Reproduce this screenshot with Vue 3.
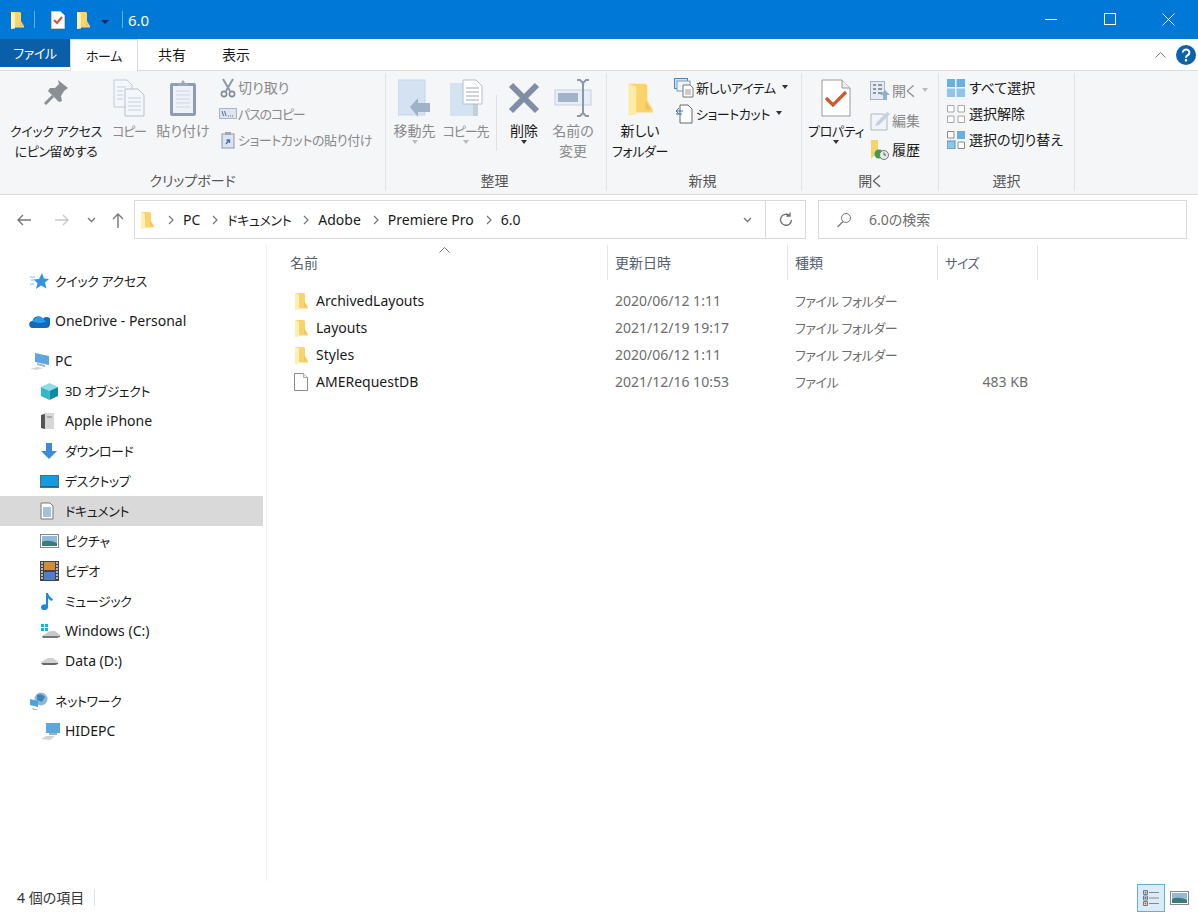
<script setup>
import { h } from 'vue'

const folderD = (a = '#fff0b4', b = '#fbd36b', c = '#e9b949') =>
  `<path d="M1 1h9l1 1v8l3 5v1.500H5L1 18z" fill="${b}"/><path d="M1 1l4 1.600V17.500L1 18z" fill="${a}"/><path d="M10 2v8l3 5h-3z" fill="${c}" opacity=".55"/>`

const icons = {
  folder: { w: 14, h: 18, d: folderD() },
  folderBig: { w: 26, h: 37, d: `<g transform="translate(0 3) scale(1.85)">${folderD('#fdeaa5', '#fbd36b', '#eab84a')}</g>` },
  check: { w: 16, h: 18, d: '<path d="M1.500.5h9l4 4v13h-13z" fill="#fff" stroke="#c9c9c9"/><path d="M4 9l3 3 5-6" fill="none" stroke="#d9502b" stroke-width="2"/>' },
  pin: { w: 26, h: 26, d: '<path d="M15 1l10 8-4 3-3 5 1 5-3 1L5 12l2-3h5l4-4z" fill="#8b8f94"/><path d="M10 17l-8 8" stroke="#8b8f94" stroke-width="3"/>' },
  copy: { w: 32, h: 38, d: '<path d="M1 1h13l5 5v22H1z" fill="#f3f7fb" stroke="#c2cad3"/><path d="M12 10h13l6 6v21H12z" fill="#f3f7fb" stroke="#b7c1cc"/><path d="M4 8h9M4 12h6M4 16h6M4 20h6M15 19h13M15 23h13M15 27h13M15 31h13" stroke="#c2d0e0"/>' },
  paste: { w: 28, h: 38, d: '<rect x="1" y="4" width="26" height="33" rx="2" fill="#8d9db4"/><rect x="4" y="7" width="20" height="27" fill="#eef2f8"/><path d="M7 12h14M7 16h14M7 20h14M7 24h14M7 28h14" stroke="#cdd7e4"/><path d="M9 7V4h3l2-3 2 3h3v3z" fill="#9aa8bb"/>' },
  scissors: { w: 16, h: 20, d: '<path d="M3 1l7 12M13 1L6 13" stroke="#8f99a5" stroke-width="2"/><circle cx="4" cy="16" r="2.600" fill="none" stroke="#7f8a97" stroke-width="1.600"/><circle cx="12" cy="16" r="2.600" fill="none" stroke="#7f8a97" stroke-width="1.600"/>' },
  pathcopy: { w: 18, h: 12, d: '<rect x=".5" y=".5" width="17" height="10" fill="#dfe5f0" stroke="#a9b5c6"/><path d="M3 3l1.500 5M5.500 3L7 8M9 8h1M11 8h1M13 8h1" stroke="#5a6f90"/>' },
  shortcut: { w: 14, h: 18, d: '<rect x="1" y="3" width="12" height="14" fill="#dde4ee" stroke="#8b99ad"/><rect x="4" y="1" width="6" height="3" fill="#9aa8bb"/><path d="M5 13l3-4M5.500 9H8.500V12" stroke="#3d78b5" fill="none" stroke-width="1.400"/>' },
  move: { w: 34, h: 38, d: '<rect x="0" y="1" width="27" height="35" fill="#d5e2f1" stroke="#c7d5e6"/><path d="M12 28l8-9v5h12v9H20v5z" fill="#9fb2c9"/>' },
  copyto: { w: 34, h: 38, d: '<rect x="1" y="4" width="28" height="33" fill="#d5e2f1"/><rect x="24" y="4" width="5" height="33" fill="#c4cfdc"/><path d="M14 1h13l6 6v18H14z" fill="#fff" stroke="#b4bfcb"/><path d="M17 9h13M17 13h13M17 17h13M17 21h13" stroke="#9aa8b8"/>' },
  del: { w: 32, h: 35, d: '<path d="M3 6l26 26M29 6L3 32" stroke="#7f8ea6" stroke-width="6"/>' },
  rename: { w: 38, h: 38, d: '<rect x="1" y="11" width="36" height="15" fill="#e7eef8" stroke="#c2d1e4"/><rect x="4" y="14" width="20" height="9" fill="#a3b3c8"/><path d="M23 1h3l3 3 3-3h3M29 4v30M23 37h3l3-3 3 3h3" fill="none" stroke="#8a98ab" stroke-width="2"/>' },
  newitem: { w: 20, h: 20, d: '<rect x=".5" y=".5" width="13" height="10" fill="#cfe3f5" stroke="#4d86b8"/><rect x="3" y="3" width="13" height="10" fill="#eef5fb" stroke="#7a9cc0"/><path d="M9 7h7l3 3v9H9z" fill="#fff" stroke="#777"/><path d="M11 12h6M11 14h6M11 16h6" stroke="#999"/>' },
  shortnew: { w: 18, h: 20, d: '<path d="M5 1h8l4 4v14H5z" fill="#fff" stroke="#666"/><path d="M1 7h7M4 4l-3 3 3 3M1 10h6" fill="none" stroke="#2a7ab8"/>' },
  props: { w: 30, h: 38, d: '<path d="M1 1h20l8 8v28H1z" fill="#fff" stroke="#9a9a9a"/><path d="M21 1v8h8" fill="#eee" stroke="#9a9a9a"/><path d="M5 19l7 7 13-13" fill="none" stroke="#d4572a" stroke-width="3.200"/>' },
  open: { w: 20, h: 20, d: '<rect x=".5" y=".5" width="14" height="18" fill="#e6ebf2" stroke="#a9b4c2"/><path d="M3 4h3M3 8h3M3 12h3M8 4h4M8 8h4M8 12h4" stroke="#8d99a8" stroke-width="2"/><path d="M15 9l5 5h-3v5h-4v-5h-3z" fill="#8fb0d0"/>' },
  edit: { w: 20, h: 20, d: '<path d="M1 3h12l4 2v14H1z" fill="#f1f4f8" stroke="#aeb8c4"/><path d="M5 15l2-4L17 1l3 2L9 14z" fill="#c3d0de"/>' },
  history: { w: 20, h: 20, d: '<path d="M1 0h7v9l4 7H4l-3 3z" fill="#f9d368"/><circle cx="9" cy="14" r="4.500" fill="#3fa04a"/><circle cx="14" cy="15" r="4.500" fill="#e8e8e8" stroke="#777"/><path d="M14 12.500V15h2" stroke="#555" fill="none"/>' },
  selAll: { w: 18, h: 18, d: '<rect width="8" height="8" fill="#68b0e2"/><rect x="9.500" width="8.500" height="8" fill="#68b0e2"/><rect y="9.500" width="8" height="8.500" fill="#8ec5ea"/><rect x="9.500" y="9.500" width="8.500" height="8.500" fill="#8ec5ea"/>' },
  selNone: { w: 18, h: 18, d: '<path d="M.5.500h6.500v6.500H.5zM11 .5h6.500v6.500H11zM.5 11h6.500v6.500H.5zM11 11h6.500v6.500H11z" fill="#fff" stroke="#a6a6a6"/>' },
  selInv: { w: 18, h: 18, d: '<path d="M.5.500h6.500v6.500H.5zM11 11h6.500v6.500H11z" fill="#fff" stroke="#8a8a8a"/><rect x="10" width="8" height="8" fill="#68b0e2"/><rect y="10" width="8" height="8" fill="#8ec5ea" stroke="#4d93c7"/>' },
  star: { w: 20, h: 18, d: '<path d="M13 1l2 5.500 5 .5-4 3.500 1.500 6L12 13.500 7 17l1.500-6-4-3.500L10 7z" fill="#3492de"/><path d="M1 5h5M2 8h3M1 12h4" stroke="#7dbcec"/>' },
  cloud: { w: 21, h: 13, d: '<path d="M4 13a3.500 3.500 0 0 1-.5-7A6 6 0 0 1 14 3.500 4.500 4.500 0 0 1 21 9.500Q20.500 13 17 13z" fill="#0f6cbd"/><path d="M4 7A6 6 0 0 1 14 3.500l3 3.500-6 1z" fill="#2b9be8"/>' },
  pc: { w: 21, h: 18, d: '<path d="M6 1l14 3v9L6 10z" fill="#5ba7de"/><path d="M8 11l8 2v2L8 13z" fill="#9db3c5"/><path d="M1 17l7-2 6 1-6 2z" fill="#d4d4d4"/>' },
  pc2: { w: 21, h: 18, d: '<rect x="6" y="1" width="14" height="10" fill="#5ba7de"/><rect x="9" y="11" width="8" height="2" fill="#9db3c5"/><path d="M1 17l5-3h9l-5 4z" fill="#d4d4d4"/>' },
  cube: { w: 19, h: 19, d: '<path d="M9.500 1L18 5 9.500 9 1 5z" fill="#8fdce6"/><path d="M1 5l8.500 4v9L1 14z" fill="#35b6ca"/><path d="M18 5L9.500 9v9L18 14z" fill="#0f8ba6"/>' },
  phone: { w: 15, h: 18, d: '<path d="M1 3l4-2h9v16H5l-4-1z" fill="#d8d8d8"/><path d="M1 3l4-1v15l-4-1z" fill="#555"/><rect x="7" y="4" width="5" height="2" fill="#aaa"/>' },
  down: { w: 18, h: 18, d: '<path d="M6 1h6v8h5l-8 8-8-8h5z" fill="#3c8ae0"/>' },
  desktop: { w: 19, h: 13, d: '<rect x=".5" y=".5" width="18" height="12" fill="#159ae4" stroke="#666"/><rect x="1" y="11" width="17" height="1" fill="#0b6fae"/>' },
  doc: { w: 14, h: 18, d: '<path d="M1 1h9l3 3v13H1z" fill="#fff" stroke="#777"/><path d="M3 6h8M3 8h8M3 10h8M3 12h8M3 14h8" stroke="#4d86b8"/>' },
  pic: { w: 19, h: 14, d: '<rect x=".5" y=".5" width="18" height="13" fill="#fff" stroke="#888"/><rect x="2" y="2" width="15" height="10" fill="#8dbbd8"/><path d="M2 8q6-3 15 1v3H2z" fill="#3b7a7a"/>' },
  video: { w: 19, h: 20, d: '<rect width="19" height="20" fill="#444"/><rect x="4" y="1" width="11" height="8" fill="#d28b36"/><rect x="4" y="11" width="11" height="8" fill="#4e80c8"/><path d="M1 2h2M1 5h2M1 8h2M1 11h2M1 14h2M1 17h2M16 2h2M16 5h2M16 8h2M16 11h2M16 14h2M16 17h2" stroke="#ddd" stroke-width="1.500"/>' },
  music: { w: 14, h: 18, d: '<path d="M6 1h2q1 4 5 6l-1 2Q9 8 8 6v9a3.500 3 0 1 1-2-2.500z" fill="#1d87d8"/>' },
  winDrive: { w: 20, h: 16, d: '<path d="M1 1h3v3H1zM5 1h3v3H5zM1 5h3v3H1zM5 5h3v3H5z" fill="#14b6d6"/><path d="M2 13l8-5h5l5 4v2l-4 1H3z" fill="#c9c9c9"/><path d="M2 13h18v1l-4 1H3z" fill="#777"/>' },
  drive: { w: 19, h: 9, d: '<path d="M1 5l7-4h5l5 4v2l-3 1H3z" fill="#d0d0d0"/><path d="M1 6h17v1l-3 1H3z" fill="#666"/>' },
  net: { w: 20, h: 18, d: '<circle cx="12" cy="7" r="6.500" fill="#8fb7d8"/><path d="M8 3q5-2 8 2l-3 5-5-2z" fill="#3f86b8"/><path d="M1 7l8 2v6l-8-2z" fill="#4aa3e0"/><path d="M3 16l4 1 3 1H4z" fill="#bbb"/>' },
  caretUp: { w: 11, h: 6, d: '<path d="M.5 5.500l5-5 5 5" fill="none" stroke="#777"/>' },
  file: { w: 14, h: 18, d: '<path d="M.5.500h9l4 4v13H.5z" fill="#fff" stroke="#8a8a8a"/><path d="M9.500.5v4h4" fill="#eee" stroke="#aaa"/>' },
  back: { w: 16, h: 12, d: '<path d="M15 6H2M7 1L2 6l5 5" fill="none" stroke="#777" stroke-width="1.400"/>' },
  fwd: { w: 16, h: 12, d: '<path d="M1 6h13M9 1l5 5-5 5" fill="none" stroke="#c8c8c8" stroke-width="1.400"/>' },
  chev: { w: 9, h: 6, d: '<path d="M1 1l3.500 3.500L8 1" fill="none" stroke="#777" stroke-width="1.300"/>' },
  up: { w: 12, h: 16, d: '<path d="M6 16V2M1 7l5-5 5 5" fill="none" stroke="#777" stroke-width="1.400"/>' },
  crumb: { w: 6, h: 10, d: '<path d="M1 1l4 4-4 4" fill="none" stroke="#777" stroke-width="1.200"/>' },
  refresh: { w: 14, h: 15, d: '<path d="M12.500 8a5.500 5.500 0 1 1-2-4.500M11 .5V4H7.500" fill="none" stroke="#6d6d6d" stroke-width="1.300"/>' },
  search: { w: 16, h: 16, d: '<circle cx="10" cy="6" r="4.500" fill="none" stroke="#777"/><path d="M7 9.500L1.500 15" stroke="#777" stroke-width="1.300"/>' },
  help: { w: 20, h: 20, d: '<circle cx="10" cy="10" r="10" fill="#0e62ab"/><path d="M6.800 7.500a3.300 3 0 1 1 5 2.600c-1.300.8-1.800 1.300-1.800 2.600" fill="none" stroke="#fff" stroke-width="2"/><rect x="8.900" y="14" width="2.200" height="2.400" fill="#fff"/>' },
  min: { w: 12, h: 1, d: '<rect width="12" height="1" fill="#fff"/>' },
  max: { w: 12, h: 12, d: '<rect x=".5" y=".5" width="11" height="11" fill="none" stroke="#fff"/>' },
  close: { w: 13, h: 13, d: '<path d="M.5.500l12 12M12.500.500l-12 12" stroke="#fff"/>' },
  details: { w: 16, h: 16, d: '<path d="M.5.500h4v4h-4zM.5 6h4v4h-4zM.5 11.500h4v4h-4z" fill="#fff" stroke="#777"/><path d="M6 2.500h10M6 8h10M6 13.500h10" stroke="#888"/><rect x="1.500" y="12.500" width="2" height="2" fill="#c0562e"/><rect x="1.500" y="1.500" width="2" height="2" fill="#3a7ab0"/><rect x="1.500" y="7" width="2" height="2" fill="#3a7ab0"/>' }
}

const Ico = (p) => {
  const i = icons[p.n]
  return h('svg', { width: i.w, height: i.h, viewBox: `0 0 ${i.w} ${i.h}`, innerHTML: i.d })
}
Ico.props = ['n']

const hasKana = (t) => /[ァ-ヶー]/.test(t)

const sideGroups = [
  [{ t: 'クイック アクセス', i: 'star' }],
  [{ t: 'OneDrive - Personal', i: 'cloud' }],
  [
    { t: 'PC', i: 'pc' },
    { t: '3D オブジェクト', i: 'cube', c: 1 },
    { t: 'Apple iPhone', i: 'phone', c: 1 },
    { t: 'ダウンロード', i: 'down', c: 1 },
    { t: 'デスクトップ', i: 'desktop', c: 1 },
    { t: 'ドキュメント', i: 'doc', c: 1, s: 1 },
    { t: 'ピクチャ', i: 'pic', c: 1 },
    { t: 'ビデオ', i: 'video', c: 1 },
    { t: 'ミュージック', i: 'music', c: 1 },
    { t: 'Windows (C:)', i: 'winDrive', c: 1 },
    { t: 'Data (D:)', i: 'drive', c: 1 }
  ],
  [
    { t: 'ネットワーク', i: 'net' },
    { t: 'HIDEPC', i: 'pc2', c: 1 }
  ]
]

const crumbs = ['PC', 'ドキュメント', 'Adobe', 'Premiere Pro', '6.0']

const files = [
  { n: 'ArchivedLayouts', i: 'folder', d: '2020/06/12 1:11', k: 'ファイル フォルダー', z: '' },
  { n: 'Layouts', i: 'folder', d: '2021/12/19 19:17', k: 'ファイル フォルダー', z: '' },
  { n: 'Styles', i: 'folder', d: '2020/06/12 1:11', k: 'ファイル フォルダー', z: '' },
  { n: 'AMERequestDB', i: 'file', d: '2021/12/16 10:53', k: 'ファイル', z: '483 KB' }
]

const cols = [
  { t: '名前', w: 341, cls: 'c-name' },
  { t: '更新日時', w: 180 },
  { t: '種類', w: 150 },
  { t: 'サイズ', w: 100 }
]
</script>

<template>
  <div class="win">
    <header class="title">
      <Ico n="folder" class="t-f1" />
      <i class="t-sep"></i>
      <Ico n="check" class="t-c" />
      <Ico n="folder" class="t-f2" />
      <span class="t-menu"><b></b></span>
      <i class="t-sep t-sep2"></i>
      <span class="t-name">6.0</span>
      <div class="wc">
        <span class="wc-b"><Ico n="min" /></span>
        <span class="wc-b"><Ico n="max" /></span>
        <span class="wc-b"><Ico n="close" /></span>
      </div>
    </header>

    <nav class="tabs">
      <span class="tab file ka">ファイル</span>
      <span class="tab home ka">ホーム</span>
      <span class="tab share">共有</span>
      <span class="tab view">表示</span>
      <span class="tab-right">
        <Ico n="caretUp" class="collapse" />
        <Ico n="help" />
      </span>
    </nav>

    <section class="ribbon">
      <div class="grp g1">
        <div class="grp-body">
          <div class="big dis-dark w108"><div class="bi"><Ico n="pin" /></div><span class="ka">クイック アクセス<br />にピン留めする</span></div>
          <div class="big dis w38"><div class="bi"><Ico n="copy" /></div><span class="kb">コピー</span></div>
          <div class="big dis w70"><div class="bi"><Ico n="paste" /></div><span>貼り付け</span></div>
          <div class="col">
            <div class="sm dis"><span class="si"><Ico n="scissors" /></span>切り取り</div>
            <div class="sm dis"><span class="si"><Ico n="pathcopy" /></span><span class="kb">パスのコピー</span></div>
            <div class="sm dis"><span class="si"><Ico n="shortcut" /></span><span class="ka">ショートカットの貼り付け</span></div>
          </div>
        </div>
        <div class="grp-label">クリップボード</div>
      </div>

      <div class="grp g2">
        <div class="grp-body">
          <div class="big dis w51"><div class="bi"><Ico n="move" /></div><span>移動先</span><b class="car light"></b></div>
          <div class="big dis w51"><div class="bi"><Ico n="copyto" /></div><span class="kb">コピー先</span><b class="car light"></b></div>
          <i class="inner-sep"></i>
          <div class="big w40"><div class="bi"><Ico n="del" /></div><span>削除</span><b class="car"></b></div>
          <div class="big dis w46 ml"><div class="bi"><Ico n="rename" /></div><span>名前の<br />変更</span></div>
        </div>
        <div class="grp-label lbl-shift">整理</div>
      </div>

      <div class="grp g3">
        <div class="grp-body">
          <div class="big w58"><div class="bi"><Ico n="folderBig" /></div><span>新しい<br /><span class="ka">フォルダー</span></span></div>
          <div class="col col-new">
            <div class="sm"><span class="si si2"><Ico n="newitem" /></span><span class="ka">新しいアイテム</span><b class="car inl"></b></div>
            <div class="sm"><span class="si si2"><Ico n="shortnew" /></span><span class="ka">ショートカット</span><b class="car inl"></b></div>
          </div>
        </div>
        <div class="grp-label lbl-shift">新規</div>
      </div>

      <div class="grp g4">
        <div class="grp-body">
          <div class="big w60"><div class="bi"><Ico n="props" /></div><span class="ka">プロパティ</span><b class="car"></b></div>
          <div class="col col-open">
            <div class="sm dis"><span class="si si2"><Ico n="open" /></span>開く<b class="car inl light"></b></div>
            <div class="sm dis"><span class="si si2"><Ico n="edit" /></span>編集</div>
            <div class="sm"><span class="si si2"><Ico n="history" /></span>履歴</div>
          </div>
        </div>
        <div class="grp-label">開く</div>
      </div>

      <div class="grp g5">
        <div class="grp-body">
          <div class="col">
            <div class="sm"><span class="si si3"><Ico n="selAll" /></span>すべて選択</div>
            <div class="sm"><span class="si si3"><Ico n="selNone" /></span>選択解除</div>
            <div class="sm"><span class="si si3"><Ico n="selInv" /></span>選択の切り替え</div>
          </div>
        </div>
        <div class="grp-label">選択</div>
      </div>
    </section>

    <section class="addr">
      <div class="nav-btns">
        <span class="nb nb-back"><Ico n="back" /></span>
        <span class="nb nb-fwd"><Ico n="fwd" /></span>
        <span class="nb nb-chev"><Ico n="chev" /></span>
        <span class="nb nb-up"><Ico n="up" /></span>
      </div>
      <div class="path">
        <Ico n="folder" class="path-f" />
        <template v-for="c in crumbs" :key="c">
          <Ico n="crumb" class="crumb-s" />
          <span class="crumb" :class="{ ka: hasKana(c) }">{{ c }}</span>
        </template>
        <span class="path-end">
          <Ico n="chev" class="path-chev" />
          <span class="path-ref"><Ico n="refresh" /></span>
        </span>
      </div>
      <div class="search">
        <Ico n="search" />
        <span>6.0の検索</span>
      </div>
    </section>

    <section class="body">
      <aside class="side">
        <div v-for="(g, gi) in sideGroups" :key="gi" class="side-g">
          <div v-for="r in g" :key="r.t" class="side-r" :class="{ child: r.c, sel: r.s }">
            <span class="side-i"><Ico :n="r.i" /></span>
            <span :class="{ ka: hasKana(r.t) }">{{ r.t }}</span>
          </div>
        </div>
      </aside>
      <main class="list">
        <div class="hdr">
          <Ico n="caretUp" class="sort" />
          <div v-for="c in cols" :key="c.t" class="hc" :class="[c.cls, { ka: hasKana(c.t) }]" :style="{ width: c.w + 'px' }">{{ c.t }}</div>
        </div>
        <div class="rows">
          <div v-for="f in files" :key="f.n" class="row">
            <span class="r-name"><span class="r-i"><Ico :n="f.i" /></span>{{ f.n }}</span>
            <span class="r-date">{{ f.d }}</span>
            <span class="r-kind ka">{{ f.k }}</span>
            <span class="r-size">{{ f.z }}</span>
          </div>
        </div>
      </main>
    </section>

    <footer class="status">
      <span class="count">4 個の項目</span>
      <i class="st-sep"></i>
      <span class="views">
        <span class="v-on"><Ico n="details" /></span>
        <span class="v-off"><Ico n="pic" /></span>
      </span>
    </footer>
  </div>
</template>

<style>
html, body { margin: 0; background: #fff; overflow: hidden; }
</style>

<style scoped>
.win {
  width: 1198px;
  height: 912px;
  display: flex;
  flex-direction: column;
  overflow: hidden;
  background: #fff;
  color: #1a1a1a;
  font: 14px/20px "Noto Sans", "Noto Sans CJK JP", sans-serif;
  font-feature-settings: "palt";
}
.ka { font-size: 13px; letter-spacing: -.4px; }
.kb { font-size: 13px; letter-spacing: -1.2px; }

.title {
  height: 39px;
  flex: none;
  background: #0078d7;
  color: #fff;
  display: flex;
  align-items: center;
  padding-left: 10px;
}
.t-sep { width: 1px; height: 17px; background: #5fb0ee; margin-left: 10px; }
.t-c { margin-left: 15px; }
.t-f2 { margin-left: 10px; }
.t-menu { width: 8px; margin-left: 11px; display: flex; flex-direction: column; align-items: center; }
.t-menu b { width: 0; height: 0; border: 4px solid transparent; border-top: 4px solid #0d2a58; border-bottom: 0; margin-top: 4px; }
.t-sep2 { margin-left: 13px; }
.t-name { margin-left: 5px; font-size: 15px; }
.wc { margin-left: auto; display: flex; }
.wc-b { width: 59px; height: 39px; display: flex; align-items: center; justify-content: center; margin-top: -1px; }

.tabs {
  height: 32px;
  flex: none;
  display: flex;
  box-sizing: border-box;
  border-bottom: 1px solid #dadbdc;
  background: #fff;
}
.tab { display: flex; align-items: center; justify-content: center; height: 31px; box-sizing: border-box; }
.file { width: 70px; background: #0a5fa8; color: #fff; height: 28px; }
.home { width: 68px; border-left: 1px solid #dadbdc; border-right: 1px solid #dadbdc; border-top: 1px solid #cfe3f3; height: 32px; background: #fff; position: relative; z-index: 1; }
.share { width: 68px; }
.view { width: 60px; }
.tab-right { margin-left: auto; display: flex; align-items: center; padding-right: 2px; }
.collapse { margin-right: 10px; }

.ribbon {
  height: 124px;
  flex: none;
  box-sizing: border-box;
  display: flex;
  background: #f5f6f7;
  border-bottom: 1px solid #dadbdc;
}
.grp {
  display: flex;
  flex-direction: column;
  box-sizing: border-box;
  margin: 2px 0 3px;
  border-right: 1px solid #e2e3e4;
}
.g1 { width: 386px; }
.g2 { width: 221px; }
.g3 { width: 195px; }
.g4 { width: 137px; }
.g5 { width: 136px; }
.grp-body { flex: 1; display: flex; min-height: 0; }
.g1 .grp-body { padding-left: 2px; }
.g2 .grp-body { padding-left: 3px; }
.g3 .grp-body, .g4 .grp-body { padding-left: 4px; }
.g5 .grp-body { padding-left: 7px; }
.grp-label { height: 20px; text-align: center; color: #555; }
.lbl-shift { padding-right: 3px; }
.big {
  display: flex;
  flex-direction: column;
  align-items: center;
  text-align: center;
  white-space: nowrap;
  padding-top: 6px;
  flex: none;
}
.bi { height: 42px; display: flex; align-items: flex-start; justify-content: center; }
.w108 { width: 108px; }
.w38 { width: 38px; }
.w70 { width: 70px; }
.w51 { width: 51px; }
.w40 { width: 40px; }
.w46 { width: 46px; }
.w58 { width: 58px; }
.w60 { width: 60px; }
.ml { margin-left: 6px; }
.dis { color: #8a8a8a; }
.dis-dark { color: #222; }
.car { display: block; width: 0; height: 0; border: 3.5px solid transparent; border-top: 4px solid #333; border-bottom: 0; margin-top: -1px; }
.car.light { border-top-color: #bbb; }
.car.inl { display: inline-block; margin: 0 0 2px 6px; }
.inner-sep { width: 1px; height: 56px; background: #e0e1e2; margin: 22px 7px 0 5px; flex: none; }
.col { display: flex; flex-direction: column; gap: 6px; padding-top: 5px; }
.col-new { margin-left: 2px; }
.col-open { gap: 9.500px; padding-top: 8px; margin-left: 1px; }
.sm { display: flex; align-items: center; white-space: nowrap; height: 20px; }
.si { width: 20px; display: flex; justify-content: center; }
.si2 { width: 25px; }
.si3 { width: 23px; justify-content: flex-start; padding-left: 1px; box-sizing: border-box; }

.addr {
  height: 50px;
  flex: none;
  display: flex;
  align-items: flex-start;
  padding-top: 5px;
  box-sizing: border-box;
  background: #fff;
}
.nav-btns { width: 134px; height: 39px; display: flex; align-items: center; flex: none; }
.nb { display: flex; }
.nb-back { margin-left: 16px; }
.nb-fwd { margin-left: 22px; }
.nb-chev { margin-left: 17px; }
.nb-up { margin-left: 16px; }
.path {
  width: 672px;
  height: 39px;
  box-sizing: border-box;
  border: 1px solid #d9d9d9;
  display: flex;
  align-items: center;
  padding-left: 5px;
  flex: none;
}
.path-f { margin-right: 14px; }
.crumb-s { margin-right: 9px; }
.crumb { margin-right: 12px; }
.path-end { margin-left: auto; display: flex; align-items: center; align-self: stretch; }
.path-chev { margin-right: 13px; }
.path-ref { width: 39px; display: flex; align-items: center; justify-content: center; border-left: 1px solid #d9d9d9; align-self: stretch; }
.search {
  margin-left: 12px;
  width: 369px;
  height: 39px;
  box-sizing: border-box;
  border: 1px solid #d9d9d9;
  display: flex;
  align-items: center;
  padding-left: 17px;
  gap: 17px;
  color: #6d6d6d;
  flex: none;
}

.body { flex: 1; display: flex; min-height: 0; }
.side {
  width: 267px;
  flex: none;
  box-sizing: border-box;
  border-right: 1px solid #f0f0f0;
  padding-top: 21px;
  padding-right: 3px;
  height: 636px;
}
.side-g { margin-bottom: 10px; }
.side-r { height: 30px; display: flex; align-items: center; padding-left: 29px; }
.side-r.child { padding-left: 40px; }
.side-r.sel { background: #d9d9d9; }
.side-i { width: 26px; display: flex; align-items: center; justify-content: flex-start; flex: none; }
.child .side-i { width: 25px; }

.list { flex: 1; min-width: 0; }
.hdr { height: 35px; display: flex; align-items: stretch; position: relative; }
.sort { position: absolute; left: 172px; top: 2px; }
.hc {
  box-sizing: border-box;
  padding-left: 7px;
  color: #55606e;
  display: flex;
  align-items: center;
  border-right: 1px solid #e5e5e5;
  flex: none;
}
.c-name { padding-left: 23px; }
.rows { padding-top: 7px; }
.row { height: 27px; display: flex; align-items: center; }
.r-name { width: 341px; display: flex; align-items: center; padding-left: 27px; box-sizing: border-box; flex: none; }
.r-i { width: 22px; display: flex; flex: none; }
.r-date { width: 180px; flex: none; color: #6d6d6d; padding-left: 7px; box-sizing: border-box; }
.r-kind { width: 150px; flex: none; color: #6d6d6d; padding-left: 7px; box-sizing: border-box; }
.r-size { width: 90px; flex: none; color: #6d6d6d; text-align: right; }

.status {
  height: 28px;
  flex: none;
  display: flex;
  align-items: center;
  padding-left: 17px;
  color: #333;
}
.st-sep { width: 1px; height: 16px; background: #e3e3e3; margin-left: 10px; }
.views { margin-left: auto; display: flex; align-items: center; padding-right: 9px; gap: 5px; }
.v-on { width: 26px; height: 26px; background: #d9ecf8; border: 1px solid #63b0d8; display: flex; align-items: center; justify-content: center; }
.v-off { display: flex; }
</style>
